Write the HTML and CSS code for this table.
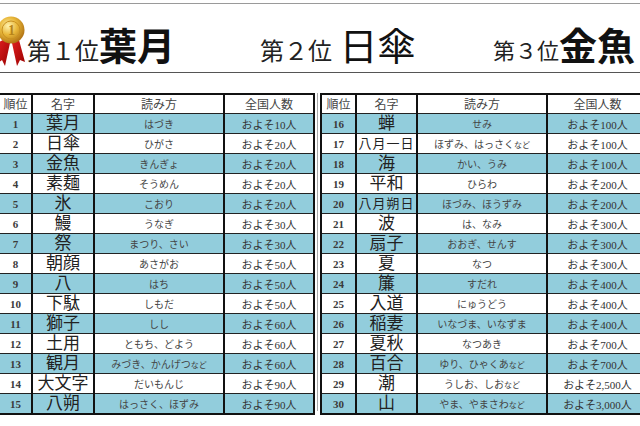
FILE: index.html
```html
<!DOCTYPE html>
<html lang="ja">
<head>
<meta charset="utf-8">
<link rel="stylesheet" href="styles.css">
</head>
<body>
<div class="page">
  <div class="header">
    <div class="group g1">
      <svg class="medal" width="27" height="58" viewBox="0 0 27 58">
        <defs>
          <radialGradient id="gold" cx="40%" cy="35%" r="65%">
            <stop offset="0" stop-color="#fff3b0"/>
            <stop offset="0.5" stop-color="#e9b83a"/>
            <stop offset="1" stop-color="#b27414"/>
          </radialGradient>
          <linearGradient id="red" x1="0" y1="0" x2="1" y2="1">
            <stop offset="0" stop-color="#e02020"/>
            <stop offset="1" stop-color="#9a0000"/>
          </linearGradient>
        </defs>
        <polygon points="3,31 10,34 5,57 2,51 -3,55 -1,33" fill="url(#red)"/>
        <polygon points="12,34 19,31 25,53 20,51 17,57" fill="url(#red)"/>
        <circle cx="11" cy="21" r="13.5" fill="url(#gold)"/>
        <circle cx="11" cy="21" r="9" fill="none" stroke="#c89020" stroke-width="1"/>
        <text x="8" y="26" font-size="14" font-family="Liberation Serif" font-weight="bold" fill="#b88418">1</text>
      </svg>
      <span class="rank">第１位</span><span class="name bold">葉月</span>
    </div>
    <div class="group g2">
      <span class="rank">第２位</span><span class="name light">&#8201;日傘</span>
    </div>
    <div class="group g3">
      <span class="rank small">第３位</span><span class="name bold">金魚</span>
    </div>
  </div>

  <div class="tables">
    <table class="tbl left">
      <colgroup><col class="c1"><col class="c2"><col class="c3"><col class="c4"></colgroup>
      <tr class="head"><td>順位</td><td>名字</td><td>読み方</td><td>全国人数</td></tr>
      <tr class="b"><td class="no">1</td><td class="nm">葉月</td><td class="rd">はづき</td><td class="ct">およそ10人</td></tr>
      <tr><td class="no">2</td><td class="nm">日傘</td><td class="rd">ひがさ</td><td class="ct">およそ20人</td></tr>
      <tr class="b"><td class="no">3</td><td class="nm">金魚</td><td class="rd">きんぎょ</td><td class="ct">およそ20人</td></tr>
      <tr><td class="no">4</td><td class="nm">素麺</td><td class="rd">そうめん</td><td class="ct">およそ20人</td></tr>
      <tr class="b"><td class="no">5</td><td class="nm">氷</td><td class="rd">こおり</td><td class="ct">およそ20人</td></tr>
      <tr><td class="no">6</td><td class="nm">鰻</td><td class="rd">うなぎ</td><td class="ct">およそ30人</td></tr>
      <tr class="b"><td class="no">7</td><td class="nm">祭</td><td class="rd">まつり、さい</td><td class="ct">およそ30人</td></tr>
      <tr><td class="no">8</td><td class="nm">朝顔</td><td class="rd">あさがお</td><td class="ct">およそ50人</td></tr>
      <tr class="b"><td class="no">9</td><td class="nm">八</td><td class="rd">はち</td><td class="ct">およそ50人</td></tr>
      <tr><td class="no">10</td><td class="nm">下駄</td><td class="rd">しもだ</td><td class="ct">およそ50人</td></tr>
      <tr class="b"><td class="no">11</td><td class="nm">獅子</td><td class="rd">しし</td><td class="ct">およそ60人</td></tr>
      <tr><td class="no">12</td><td class="nm">土用</td><td class="rd">ともち、どよう</td><td class="ct">およそ60人</td></tr>
      <tr class="b"><td class="no">13</td><td class="nm">観月</td><td class="rd">みづき、かんげつ<span class="sm">など</span></td><td class="ct">およそ60人</td></tr>
      <tr><td class="no">14</td><td class="nm">大文字</td><td class="rd">だいもんじ</td><td class="ct">およそ90人</td></tr>
      <tr class="b"><td class="no">15</td><td class="nm">八朔</td><td class="rd">はっさく、ほずみ</td><td class="ct">およそ90人</td></tr>
    </table>
    <div class="divider"></div>
    <table class="tbl right">
      <colgroup><col class="r1"><col class="r2"><col class="r3"><col class="r4"></colgroup>
      <tr class="head"><td>順位</td><td>名字</td><td>読み方</td><td>全国人数</td></tr>
      <tr class="b"><td class="no">16</td><td class="nm">蝉</td><td class="rd">せみ</td><td class="ct">およそ100人</td></tr>
      <tr><td class="no">17</td><td class="nm long">八月一日</td><td class="rd">ほずみ、はっさく<span class="sm">など</span></td><td class="ct">およそ100人</td></tr>
      <tr class="b"><td class="no">18</td><td class="nm">海</td><td class="rd">かい、うみ</td><td class="ct">およそ100人</td></tr>
      <tr><td class="no">19</td><td class="nm">平和</td><td class="rd">ひらわ</td><td class="ct">およそ200人</td></tr>
      <tr class="b"><td class="no">20</td><td class="nm long">八月朔日</td><td class="rd">ほづみ、ほうずみ</td><td class="ct">およそ200人</td></tr>
      <tr><td class="no">21</td><td class="nm">波</td><td class="rd">は、なみ</td><td class="ct">およそ300人</td></tr>
      <tr class="b"><td class="no">22</td><td class="nm">扇子</td><td class="rd">おおぎ、せんす</td><td class="ct">およそ300人</td></tr>
      <tr><td class="no">23</td><td class="nm">夏</td><td class="rd">なつ</td><td class="ct">およそ300人</td></tr>
      <tr class="b"><td class="no">24</td><td class="nm">簾</td><td class="rd">すだれ</td><td class="ct">およそ400人</td></tr>
      <tr><td class="no">25</td><td class="nm">入道</td><td class="rd">にゅうどう</td><td class="ct">およそ400人</td></tr>
      <tr class="b"><td class="no">26</td><td class="nm">稲妻</td><td class="rd">いなづま、いなずま</td><td class="ct">およそ400人</td></tr>
      <tr><td class="no">27</td><td class="nm">夏秋</td><td class="rd">なつあき</td><td class="ct">およそ700人</td></tr>
      <tr class="b"><td class="no">28</td><td class="nm">百合</td><td class="rd">ゆり、ひゃくあ<span class="sm">など</span></td><td class="ct">およそ700人</td></tr>
      <tr><td class="no">29</td><td class="nm">潮</td><td class="rd">うしお、しお<span class="sm">など</span></td><td class="ct">およそ2,500人</td></tr>
      <tr class="b"><td class="no">30</td><td class="nm">山</td><td class="rd">やま、やまさわ<span class="sm">など</span></td><td class="ct">およそ3,000人</td></tr>
    </table>
  </div>
</div>
</body>
</html>
```

FILE: styles.css
```css
html, body {
  margin: 0;
  padding: 0;
  background: #ffffff;
}
body {
  width: 640px;
  height: 426px;
  overflow: hidden;
  font-family: "Liberation Serif", "Noto Sans CJK JP", serif;
  color: #222;
}
.page {
  width: 660px;
  padding-top: 3px;
}
.header {
  border-top: 1px solid #9a9a9a;
  border-bottom: 1px solid #555;
  height: 70px;
  display: grid;
  grid-template-columns: 260px 233px auto;
  align-items: end;
  box-sizing: border-box;
  padding-bottom: 5px;
  white-space: nowrap;
}
.group {
  display: flex;
  align-items: flex-end;
}
.medal {
  display: block;
  align-self: flex-start;
  margin-top: 1px;
}
.rank {
  font-size: 24px;
  line-height: 24px;
  margin-bottom: 3px;
  color: #222;
}
.rank.small {
  font-size: 22px;
  line-height: 22px;
  margin-bottom: 4px;
}
.name {
  font-size: 38px;
  line-height: 40px;
  color: #111;
}
.name.bold {
  font-weight: 700;
}
.name.light {
  font-weight: 400;
}
.tables {
  display: flex;
  margin-top: 20px;
  margin-left: -2px;
  align-items: flex-start;
}
.divider {
  width: 1px;
  height: 318px;
  background: #a8a8a8;
  margin: 0 2px;
}
.tbl {
  border-collapse: collapse;
  table-layout: fixed;
  border: 2px solid #111;
}
.tbl.left { width: 315px; }
.tbl.right { width: 327px; }
.c1 { width: 33px; }
.c2 { width: 62px; }
.c3 { width: 130px; }
.c4 { width: 90px; }
.r1 { width: 35px; }
.r2 { width: 61px; }
.r3 { width: 130px; }
.r4 { width: 101px; }
.tbl td {
  border-top: 1px solid #222;
  border-bottom: 1px solid #222;
  border-left: 2px solid #111;
  border-right: 2px solid #111;
  padding: 0;
  height: 19px;
  text-align: center;
  vertical-align: middle;
  white-space: nowrap;
  overflow: hidden;
}
.tbl tr.head td {
  height: 18px;
  font-size: 12px;
  color: #444;
  background: #ffffff;
}
.tbl tr.b td {
  background: #92cddc;
}
.no {
  font-size: 11px;
  font-weight: 700;
  color: #3a3a3a;
}
.nm {
  font-size: 17px;
  line-height: 18px;
  color: #222;
}
.nm.long {
  font-size: 13px;
  letter-spacing: 1px;
}
.rd {
  font-size: 10px;
  color: #444;
}
.rd .sm {
  font-size: 8px;
}
.ct {
  font-size: 11px;
  color: #333;
}
```
